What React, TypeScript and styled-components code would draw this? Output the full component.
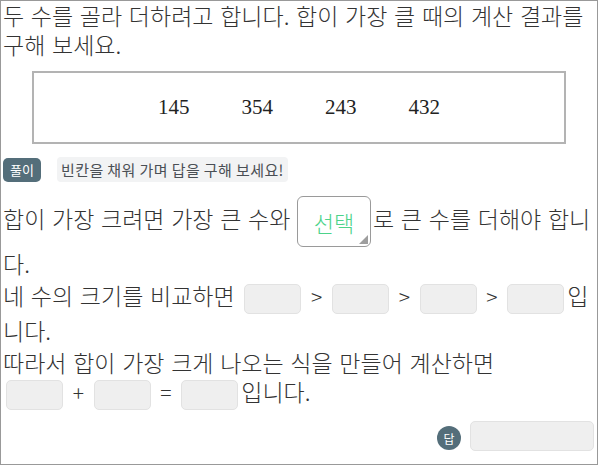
import styled, { createGlobalStyle } from 'styled-components'

const GlobalStyle = createGlobalStyle`
	html, body {
		margin: 0;
		padding: 0;
		background: #fff;
	}
`

const Frame = styled.div`
	box-sizing: border-box;
	width: 598px;
	height: 465px;
	border: 1px solid #999;
	padding: 0 2px;
	font-family: 'Noto Sans CJK KR', 'Noto Sans', sans-serif;
	font-weight: 300;
	color: #333;
	overflow: hidden;
`

const Question = styled.p`
	margin: 0;
	font-size: 23px;
	line-height: 29px;
	word-spacing: 1.6px;
`

const NumberBox = styled.div`
	box-sizing: border-box;
	margin: 12px 0 0 29px;
	width: 534px;
	height: 73px;
	border: 2px solid #b3b3b3;
	display: flex;
	align-items: center;
	justify-content: center;
	gap: 52px;
	font-family: 'Liberation Serif', serif;
	font-size: 21px;
	color: #222;
`

const HintRow = styled.div`
	display: flex;
	align-items: center;
	gap: 16px;
	margin-top: 13px;
`

const Badge = styled.span`
	display: inline-flex;
	align-items: center;
	justify-content: center;
	width: 38px;
	height: 24px;
	border-radius: 5px;
	background: #546e7a;
	color: #fff;
	font-size: 13px;
	font-weight: 400;
`

const Hint = styled.span`
	padding: 2px 4px;
	border-radius: 4px;
	background: #f2f3f4;
	color: #4a4f55;
	font-size: 15px;
	font-weight: 400;
	letter-spacing: 0.4px;
`

const Solution = styled.div`
	margin-top: 14px;
	font-size: 23px;
	line-height: 32px;
	word-spacing: 1.6px;
`

const Select = styled.span`
	position: relative;
	display: inline-flex;
	align-items: center;
	justify-content: center;
	box-sizing: border-box;
	width: 74px;
	height: 51px;
	margin: 0 2px 0 0;
	vertical-align: middle;
	border: 1px solid #9a9a9a;
	border-radius: 6px;
	color: #4cd38a;
	font-size: 22px;
	word-spacing: 0;
`

const Corner = styled.span`
	position: absolute;
	right: 2px;
	bottom: 2px;
	width: 0;
	height: 0;
	border-left: 9px solid transparent;
	border-bottom: 9px solid #9e9e9e;
`

const Blank = styled.span`
	display: inline-block;
	box-sizing: border-box;
	width: 57px;
	height: 30px;
	margin: 0 3px;
	vertical-align: middle;
	background: #efefef;
	border: 1px solid #e2e2e2;
	border-radius: 5px;
`

const Sign = styled.span`
	font-size: 21px;
`

const LastLine = styled.div`
	margin-top: -3px;
`

const AnswerRow = styled.div`
	display: flex;
	justify-content: flex-end;
	align-items: center;
	gap: 9px;
	margin-top: 11px;
	padding-right: 1px;
`

const AnswerDot = styled.span`
	display: inline-flex;
	align-items: center;
	justify-content: center;
	width: 24px;
	height: 24px;
	margin-top: 5px;
	border-radius: 50%;
	background: #546e7a;
	color: #fff;
	font-size: 12px;
	font-weight: 400;
`

const AnswerBox = styled.span`
	box-sizing: border-box;
	width: 124px;
	height: 30px;
	background: #efefef;
	border: 1px solid #e2e2e2;
	border-radius: 5px;
`

export default function App() {
	const numbers = [145, 354, 243, 432]

	return (
		<>
			<GlobalStyle />
			<Frame>
				<Question>
					두 수를 골라 더하려고 합니다. 합이 가장 클 때의 계산 결과를 구해 보세요.
				</Question>
				<NumberBox>
					{numbers.map((n) => (
						<span key={n}>{n}</span>
					))}
				</NumberBox>
				<HintRow>
					<Badge>풀이</Badge>
					<Hint>빈칸을 채워 가며 답을 구해 보세요!</Hint>
				</HintRow>
				<Solution>
					합이 가장 크려면 가장 큰 수와{' '}
					<Select>
						선택
						<Corner />
					</Select>
					로 큰 수를 더해야 합니다.
					<br />
					네 수의 크기를 비교하면 <Blank /> <Sign>&gt;</Sign> <Blank /> <Sign>&gt;</Sign>{' '}
					<Blank /> <Sign>&gt;</Sign> <Blank />입니다.
					<br />
					따라서 합이 가장 크게 나오는 식을 만들어 계산하면
					<LastLine>
						<Blank /> <Sign>+</Sign> <Blank /> <Sign>=</Sign> <Blank />입니다.
					</LastLine>
				</Solution>
				<AnswerRow>
					<AnswerDot>답</AnswerDot>
					<AnswerBox />
				</AnswerRow>
			</Frame>
		</>
	)
}
